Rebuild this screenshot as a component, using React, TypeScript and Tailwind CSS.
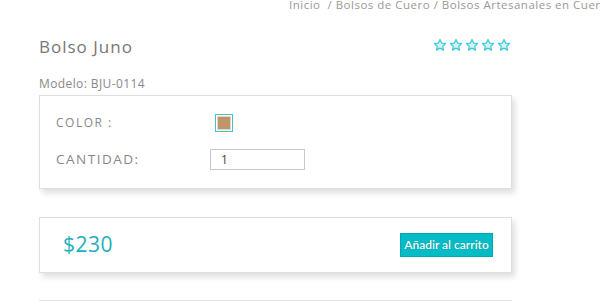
import React from "react";

function Star() {
  return (
    <svg width="14" height="14" viewBox="0 0 24 24">
      <path
        d="M12 2.5l2.9 6.2 6.7.7-5 4.6 1.4 6.7L12 17.3l-6 3.4 1.4-6.7-5-4.6 6.7-.7z"
        fill="#d9f6f8"
        stroke="#3fcbd6"
        strokeWidth="2.2"
        strokeLinejoin="round"
      />
    </svg>
  );
}

export default function App() {
  return (
    <div
      className="w-[600px] h-[307px] bg-white overflow-hidden relative text-[#777]"
      style={{ fontFamily: '"Open Sans", "Noto Sans", sans-serif' }}
    >
      <div className="absolute left-[289px] top-[-4px] whitespace-nowrap text-[11.5px] tracking-[0.5px] text-[#999]">
        Inicio&nbsp;&nbsp;/ Bolsos de Cuero&nbsp;/ Bolsos Artesanales en Cuero
      </div>
      <div className="pl-[39px] w-[512px]">
        <div className="pt-[35px] flex items-start justify-between">
          <div className="text-[17px] tracking-[1px] text-[#777] leading-[24px]">Bolso Juno</div>
          <div className="flex gap-[2px] mt-[3px] mr-[1px]">
            <Star />
            <Star />
            <Star />
            <Star />
            <Star />
          </div>
        </div>
        <div className="mt-[17px] text-[12px] tracking-[0.4px] leading-[16px] text-[#888]">Modelo: BJU-0114</div>
        <div className="mt-[3px] h-[94px] border border-[#dedede] shadow-[3px_4px_6px_rgba(0,0,0,0.13)] pl-[16px] pt-[18px]">
          <div className="flex items-center h-[18px]">
            <div className="w-[159px] text-[12px] tracking-[1.5px] text-[#888]">COLOR :</div>
            <div className="w-[18px] h-[18px] border border-[#3fc6cf] p-[1px] bg-white">
              <div className="w-full h-full bg-[#bf966a] border border-[#e6d6bf]"></div>
            </div>
          </div>
          <div className="flex items-center mt-[17px] h-[21px]">
            <div className="w-[154px] text-[13.5px] tracking-[1.5px] text-[#888]">CANTIDAD:</div>
            <div className="w-[95px] h-[21px] border border-[#c8c8cc] text-[12px] text-[#444] pl-[10px] leading-[19px]">1</div>
          </div>
        </div>
        <div className="mt-[28px] h-[56px] border border-[#dedede] shadow-[3px_4px_6px_rgba(0,0,0,0.13)] flex items-center justify-between pl-[23px] pr-[18px]">
          <div className="text-[21px] text-[#1fb0bb] tracking-[0.5px]">$230</div>
          <div
            className="h-[24px] w-[93px] flex items-center justify-center bg-[#03bcc6] border border-[#02a8b1] text-white text-[12px] font-semibold whitespace-nowrap [text-shadow:0_0_1px_rgba(0,0,0,0.3)]"
            style={{ fontFamily: "Lato, sans-serif" }}
          >
            Añadir al carrito
          </div>
        </div>
        <div className="mt-[27px] h-px bg-[#e2e2e2]"></div>
      </div>
    </div>
  );
}
